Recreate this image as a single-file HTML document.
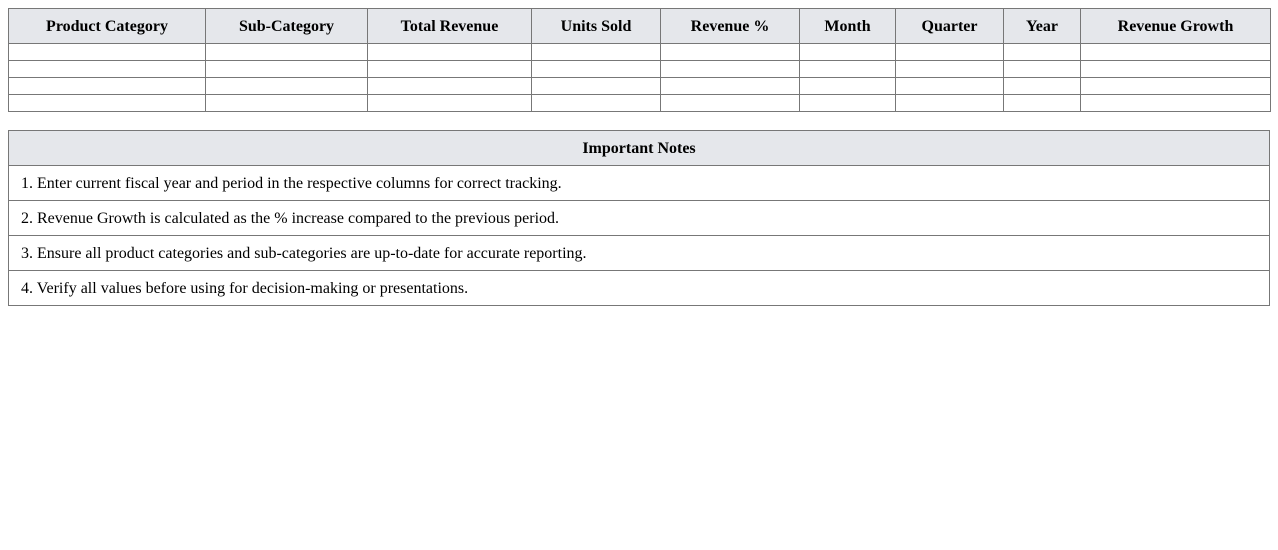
<!DOCTYPE html>
<html><head><meta charset="utf-8"><style>
body{margin:0;background:#fff;font-family:"Liberation Serif",serif;font-size:16px;color:#000}
table{border-collapse:collapse;position:absolute;left:8px;width:1262px;table-layout:fixed}
td,th{border:1px solid #777;padding:0}
th{background:#e5e7eb;font-weight:bold;font-size:16px;text-align:center;padding-top:2px}
#t1{top:8px}
#t1 th{height:32px}
#t1 td{height:16px}
#t2{top:130px}
#t2 th{height:32px}
#t2 td{height:33px;padding-left:12px;padding-top:1px}
</style></head><body>
<table id="t1">
<colgroup><col style="width:197px"><col style="width:162px"><col style="width:164px"><col style="width:129px"><col style="width:139px"><col style="width:96px"><col style="width:108px"><col style="width:77px"><col style="width:190px"></colgroup>
<tr><th>Product Category</th><th>Sub-Category</th><th>Total Revenue</th><th>Units Sold</th><th>Revenue %</th><th>Month</th><th>Quarter</th><th>Year</th><th>Revenue Growth</th></tr>
<tr><td></td><td></td><td></td><td></td><td></td><td></td><td></td><td></td><td></td></tr>
<tr><td></td><td></td><td></td><td></td><td></td><td></td><td></td><td></td><td></td></tr>
<tr><td></td><td></td><td></td><td></td><td></td><td></td><td></td><td></td><td></td></tr>
<tr><td></td><td></td><td></td><td></td><td></td><td></td><td></td><td></td><td></td></tr>
</table>
<table id="t2">
<tr><th>Important Notes</th></tr>
<tr><td>1. Enter current fiscal year and period in the respective columns for correct tracking.</td></tr>
<tr><td>2. Revenue Growth is calculated as the % increase compared to the previous period.</td></tr>
<tr><td>3. Ensure all product categories and sub-categories are up-to-date for accurate reporting.</td></tr>
<tr><td>4. Verify all values before using for decision-making or presentations.</td></tr>
</table>
</body></html>
